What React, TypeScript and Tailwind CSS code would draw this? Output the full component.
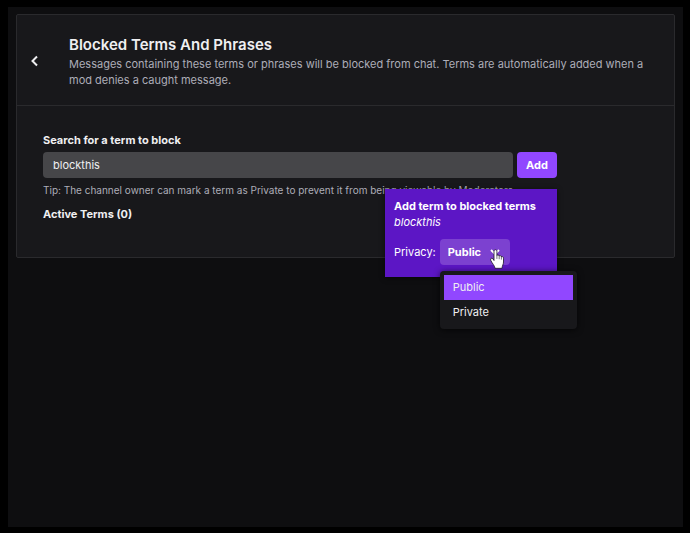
import { useState } from "react";
import type { MouseEvent } from "react";

const PRIVACY_OPTIONS = ["Public", "Private"];

function HandCursor() {
  return (
    <svg
      viewBox="0 0 14 20"
      className="pointer-events-none absolute top-2.5 left-[50px] h-5 w-3.5"
      aria-hidden="true"
    >
      <path
        d="M4 11.5V2.2C4 0.2 6.9 0.2 6.9 2.2V6.4C7.4 5.7 9.1 5.9 9.2 7C9.9 6.3 11.3 6.6 11.4 7.7C12.3 7.3 13.5 7.8 13.5 9.2V13C13.5 15.4 12.2 16.6 12 19.3H5C4.9 16.8 2.2 14.6 0.7 11.2C0.1 9.4 1.8 8.6 2.8 9.7Z"
        fill="#fff"
        stroke="#1a1426"
        strokeWidth="0.8"
        strokeLinejoin="round"
      />
      <path
        d="M6.9 6.5V9.5M9.2 7V9.8M11.4 7.7V10.2"
        stroke="#1a1426"
        strokeWidth="0.6"
        strokeLinecap="round"
      />
    </svg>
  );
}

function PrivacySelect() {
  const [open, setOpen] = useState(true);
  const [privacy, setPrivacy] = useState("Public");

  const toggle = (e: MouseEvent) => {
    e.preventDefault();
    setOpen(!open);
  };

  return (
    <div className="relative">
      <select
        id="privacy"
        value={privacy}
        onChange={(e) => setPrivacy(e.target.value)}
        onMouseDown={toggle}
        className="block h-[26px] w-[70px] cursor-pointer appearance-none rounded bg-[#7c41d0] pl-2 text-[11px] font-bold text-white outline-none"
      >
        {PRIVACY_OPTIONS.map((option) => (
          <option key={option}>{option}</option>
        ))}
      </select>
      <svg
        viewBox="0 0 10 6"
        className="pointer-events-none absolute top-[10px] right-2.5 h-1.5 w-2.5"
        fill="none"
        stroke="#fff"
        strokeWidth="1.8"
        aria-hidden="true"
      >
        <path d="M1 1L5 5L9 1" />
      </svg>

      {open && (
        <ul
          role="listbox"
          aria-label="Privacy"
          className="absolute top-full left-0 mt-1.5 w-[137px] rounded bg-[#18181b] p-1 shadow-[0_1px_6px_#000000b0]"
        >
          {PRIVACY_OPTIONS.map((option) => (
            <li
              key={option}
              role="option"
              aria-selected={option === privacy}
              onClick={() => {
                setPrivacy(option);
                setOpen(false);
              }}
              className="cursor-pointer px-[9px] leading-[25px] text-[#efeff1] aria-selected:bg-[#9147ff]"
            >
              {option}
            </li>
          ))}
        </ul>
      )}
      <HandCursor />
    </div>
  );
}

function AddTermPopover({ term }: { term: string }) {
  return (
    <div className="absolute top-full right-0 mt-[11px] h-[88px] w-[172px] bg-[#5c16c5] px-[9px] pt-[9px] leading-4 text-white shadow-[0_1px_5px_#00000090]">
      <p className="font-bold whitespace-nowrap">Add term to blocked terms</p>
      <p className="italic">{term}</p>
      <div className="mt-[9px] flex items-center gap-1">
        <label htmlFor="privacy">Privacy:</label>
        <PrivacySelect />
      </div>
    </div>
  );
}

export default function App() {
  const [term, setTerm] = useState("blockthis");

  return (
    <div className="min-h-screen bg-black pt-[7px] pr-[7px] pb-1.5 pl-2 font-['Inter',sans-serif] text-[11px] text-[#efeff1]">
      <main className="min-h-[calc(100vh-13px)] bg-[#0e0e10] px-2 py-[7px]">
        <section className="rounded-xs border border-[#2a2a2d] bg-[#18181b]">
          <header className="flex items-center border-b border-[#2a2a2d] pt-[19px] pr-4 pb-[17px]">
            <button type="button" aria-label="Back" className="flex w-[52px] shrink-0 pl-3">
              <svg
                viewBox="0 0 12 12"
                className="size-3"
                fill="none"
                stroke="#efeff1"
                strokeWidth="2"
                aria-hidden="true"
              >
                <path d="M8 1.5L3.5 6L8 10.5" />
              </svg>
            </button>
            <div>
              <h1 className="text-[15px] leading-[22px] font-semibold">
                Blocked Terms And Phrases
              </h1>
              <p className="leading-4 text-[#adadb8]">
                Messages containing these terms or phrases will be blocked from chat. Terms are
                automatically added when a mod denies a caught message.
              </p>
            </div>
          </header>

          <div className="px-[26px] pt-[26px] pb-[35px]">
            <form className="relative max-w-[514px]" onSubmit={(e) => e.preventDefault()}>
              <label htmlFor="term" className="block leading-4 font-bold">
                Search for a term to block
              </label>
              <div className="mt-1 flex gap-1">
                <input
                  id="term"
                  type="text"
                  value={term}
                  onChange={(e) => setTerm(e.target.value)}
                  className="h-[26px] min-w-0 flex-1 rounded bg-[#464649] px-2.5 outline-none"
                />
                <button
                  type="submit"
                  className="h-[26px] w-10 rounded bg-[#9147ff] font-bold text-white"
                >
                  Add
                </button>
              </div>
              <AddTermPopover term={term} />
            </form>
            <p className="mt-1 text-[10px] leading-4 text-[#adadb8]">
              Tip: The channel owner can mark a term as Private to prevent it from being viewable by
              Moderators.
            </p>
            <h2 className="mt-2 leading-4 font-bold">Active Terms (0)</h2>
          </div>
        </section>
      </main>
    </div>
  );
}
